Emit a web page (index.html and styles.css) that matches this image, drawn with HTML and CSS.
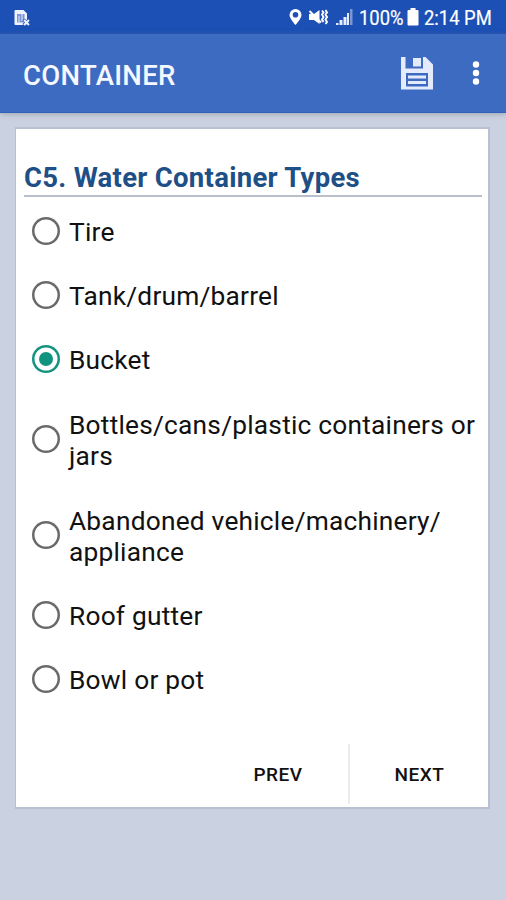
FILE: index.html
```html
<!DOCTYPE html>
<html lang="en">
<head>
<meta charset="utf-8">
<title>Container</title>
<link rel="stylesheet" href="styles.css">
</head>
<body>
<div class="status">
  <svg class="sim" width="17" height="18" viewBox="0 0 17 18"><path fill="#eef3ff" d="M1.500 1H9.500L13 4.500V16H1.500A1 1 0 0 1 .5 15V2A1 1 0 0 1 1.500 1Z"/><path fill="#7f96d4" d="M3 5H10.500V13.500H3Z"/><path stroke="#dfe7fb" stroke-width="1" d="M5 7V13.500M8 5V12"/><path stroke="#1c50b5" stroke-width="3" d="M9.500 10.500 15 16M15 10.500 9.500 16"/><path stroke="#eef3ff" stroke-width="1.900" d="M10 11 15 16M15 11 10 16"/></svg>
  <div class="status-right">
    <svg class="pin" width="13" height="18" viewBox="0 0 13 18"><path fill="#fff" fill-rule="evenodd" d="M6.500 1A6 6 0 0 1 12.500 7C12.500 10.500 6.500 17 6.500 17S.5 10.500 .5 7A6 6 0 0 1 6.500 1ZM6.500 4A2.800 2.800 0 1 0 6.500 9.600A2.800 2.800 0 1 0 6.500 4Z"/></svg>
    <svg class="mute" width="20" height="18" viewBox="0 0 20 18"><path fill="#fff" d="M1 6H6L11.500 2V16L6 12H1Z"/><path stroke="#fff" stroke-width="2" d="M1.500 3 13 14.500"/><path stroke="#fff" stroke-width="1.900" fill="none" d="M14 2.500 15.500 4.500 14 6.500 15.500 9 14 11.500 15.500 14M17.500 2 19 4.500 17.500 6.500 19 9 17.500 11.500 19 14 17.500 16"/></svg>
    <svg class="signal" width="17" height="17" viewBox="0 0 17 17"><path fill="#e6edff" d="M0 14H2.500V16H0ZM3.500 11H6.500V16H3.500ZM7.500 8H10.500V16H7.500ZM11 4H13V16H11Z"/><path fill="#7797d9" d="M14 0H16.500V16H14Z"/></svg>
    <span class="percent"><span class="squeeze">100%</span></span>
    <svg class="battery" width="12" height="18" viewBox="0 0 12 18"><path fill="#fff" d="M3.500 0H8.500V2H10.500Q11.500 2 11.500 3V16.500Q11.500 17.500 10.500 17.500H1.500Q.5 17.500 .5 16.500V3Q.5 2 1.500 2H3.500Z"/></svg>
    <span class="clock"><span class="squeeze">2:14 PM</span></span>
  </div>
</div>
<header class="appbar">
  <h1>CONTAINER</h1>
  <svg class="save" width="32" height="33" viewBox="0 0 32 33"><path fill="#e3ebfc" d="M0 0H4.500V11.500H22V0H24.500L32 7.500V32.500H0Z"/><path fill="#e3ebfc" d="M12 1H20V9.500H12Z"/><path fill="#3e6bc2" d="M5 16H27V29.500H5Z"/><path fill="#e3ebfc" d="M7 18.500H25V21.500H7ZM7 24H25V27H7Z"/></svg>
  <svg class="more" width="8" height="24" viewBox="0 0 8 24"><g fill="#fff"><circle cx="4" cy="3.500" r="3.200"/><circle cx="4" cy="12" r="3.200"/><circle cx="4" cy="20.500" r="3.200"/></g></svg>
</header>
<main class="card">
  <h2>C5. Water Container Types</h2>
  <div class="options">
    <div class="option"><span class="radio"></span><span class="label">Tire</span></div>
    <div class="option"><span class="radio"></span><span class="label">Tank/drum/barrel</span></div>
    <div class="option"><span class="radio checked"></span><span class="label">Bucket</span></div>
    <div class="option tall"><span class="radio"></span><span class="label">Bottles/cans/plastic containers or<br>jars</span></div>
    <div class="option tall"><span class="radio"></span><span class="label">Abandoned vehicle/machinery/<br>appliance</span></div>
    <div class="option"><span class="radio"></span><span class="label">Roof gutter</span></div>
    <div class="option"><span class="radio"></span><span class="label">Bowl or pot</span></div>
  </div>
  <div class="actions"><span class="btn">PREV</span><span class="btn next">NEXT</span></div>
</main>
</body>
</html>
```
FILE: styles.css
```css
* { box-sizing: border-box; }
body { margin: 0; width: 506px; height: 900px; overflow: hidden; background: #cad1e0; font-family: Roboto, sans-serif; color: #111; }
.status { height: 34px; background: #1c50b5; display: flex; align-items: center; justify-content: space-between; padding: 0 13px 0 14px; color: #fff; }
.sim { margin-top: 1px; }
.status-right { display: flex; align-items: center; font-size: 20px; white-space: nowrap; }
.mute { margin-left: 6px; }
.signal { margin-left: 8px; }
.percent { margin-left: 6px; width: 45px; padding-top: 2px; }
.battery { margin-left: 3px; }
.clock { margin-left: 5px; width: 69px; padding-top: 2px; }
.squeeze { display: inline-block; transform: scaleX(.92); transform-origin: 0 50%; -webkit-text-stroke: .2px #fff; }
.appbar { height: 79px; background: #3e6bc2; border-bottom: 1px solid #3261b9; box-shadow: 0 1px 5px rgba(110, 115, 130, .5); display: flex; align-items: center; padding: 0 26px 0 23px; }
h1 { margin: 4px auto 0 0; font-size: 27.5px; font-weight: 500; letter-spacing: .3px; color: #f5f8ff; white-space: nowrap; }
.save { margin-right: 39px; }
.card { margin: 14px 16px 0 15px; height: 682px; background: #fff; border: 2px solid #b9c1d0; border-left-width: 1px; padding: 0 6px 0 8px; display: flex; flex-direction: column; }
h2 { margin: 0; height: 68px; padding-top: 33px; line-height: 32px; font-size: 27.5px; font-weight: 700; letter-spacing: .28px; color: #1e4f86; border-bottom: 2px solid #b9c0ca; white-space: nowrap; }
.options { padding: 2px 0 0 8px; }
.option { height: 64px; display: flex; align-items: center; }
.option.tall { height: 96px; }
.radio { flex: none; width: 28px; height: 28px; box-shadow: inset 0 0 0 2.5px #6a6a6a; border-radius: 50%; margin-right: 9px; display: grid; place-items: center; }
.radio.checked { box-shadow: inset 0 0 0 2.5px #149480; }
.radio.checked::after { content: ""; width: 14px; height: 14px; border-radius: 50%; background: #109480; }
.label { font-size: 26.3px; line-height: 31px; letter-spacing: .22px; white-space: nowrap; padding-top: 3px; }
.actions { margin-top: auto; height: 60px; margin-bottom: 3px; display: flex; justify-content: flex-end; }
.btn { width: 142px; padding-left: 2px; display: flex; align-items: center; justify-content: center; font-size: 19px; font-weight: 500; letter-spacing: .5px; }
.next { border-left: 2px solid #ececec; width: 134px; padding-left: 7px; }
```
